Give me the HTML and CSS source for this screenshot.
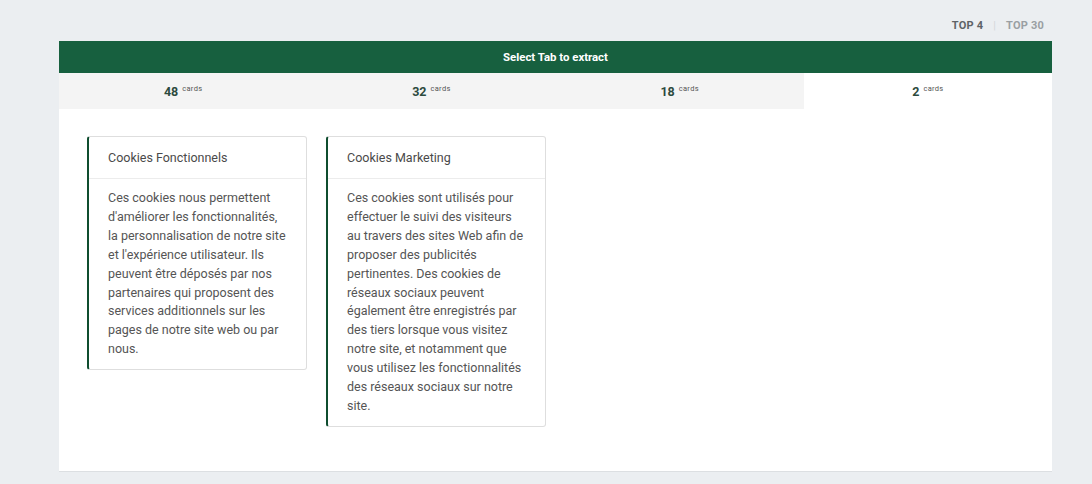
FILE: index.html
```html
<!DOCTYPE html>
<html lang="fr">
<head>
<meta charset="utf-8">
<link rel="stylesheet" href="styles.css">
</head>
<body>
<div class="page">
  <nav class="top-links">
    <span class="top-link active">TOP 4</span>
    <span class="sep">|</span>
    <span class="top-link">TOP 30</span>
  </nav>
  <section class="panel">
    <header class="panel-head">Select Tab to extract</header>
    <div class="tabs">
      <div class="tab"><b>48</b><sup>cards</sup></div>
      <div class="tab"><b>32</b><sup>cards</sup></div>
      <div class="tab"><b>18</b><sup>cards</sup></div>
      <div class="tab current"><b>2</b><sup>cards</sup></div>
    </div>
    <div class="cards">
      <article class="card">
        <h3 class="card-title">Cookies Fonctionnels</h3>
        <p class="card-body">Ces cookies nous permettent d'améliorer les fonctionnalités, la personnalisation de notre site et l'expérience utilisateur. Ils peuvent être déposés par nos partenaires qui proposent des services additionnels sur les pages de notre site web ou par nous.</p>
      </article>
      <article class="card">
        <h3 class="card-title">Cookies Marketing</h3>
        <p class="card-body">Ces cookies sont utilisés pour effectuer le suivi des visiteurs au travers des sites Web afin de proposer des publicités pertinentes. Des cookies de réseaux sociaux peuvent également être enregistrés par des tiers lorsque vous visitez notre site, et notamment que vous utilisez les fonctionnalités des réseaux sociaux sur notre site.</p>
      </article>
    </div>
  </section>
</div>
</body>
</html>
```
FILE: styles.css
```css
html, body {
  margin: 0;
  padding: 0;
  background: #ebeef1;
  font-family: Roboto, "Liberation Sans", sans-serif;
}
.page {
  padding: 16px 40px 13px 59px;
}
.top-links {
  display: flex;
  justify-content: flex-end;
  align-items: center;
  gap: 10px;
  height: 18px;
  padding-right: 8px;
  margin-bottom: 7px;
  font-size: 11px;
  font-weight: 700;
  letter-spacing: 0.2px;
}
.top-link { color: #9a9fa3; }
.top-link.active { color: #5e6367; }
.sep { color: #d4d7da; font-weight: 400; }
.panel {
  background: #fff;
  height: 430px;
  border-bottom: 1px solid #dcdfe2;
}
.panel-head {
  background: #17603f;
  color: #fff;
  height: 32px;
  display: flex;
  align-items: center;
  justify-content: center;
  font-size: 11.4px;
  font-weight: 700;
}
.tabs {
  display: grid;
  grid-template-columns: repeat(4, 1fr);
  height: 36px;
}
.tab {
  background: #f4f4f4;
  display: flex;
  justify-content: center;
  align-items: center;
  gap: 4px;
  color: #2c4a3e;
}
.tab b { font-size: 12.5px; font-weight: 700; }
.tab sup { font-size: 7.5px; color: #555; align-self: flex-start; margin-top: 11px; letter-spacing: 0.3px; }
.tab.current { background: #fff; }
.cards {
  display: flex;
  align-items: flex-start;
  gap: 19px;
  padding: 27px 28px;
}
.card {
  width: 217px;
  border: 1px solid #dedede;
  border-left: 2px solid #0f4d2f;
  border-radius: 3px;
  background: #fff;
}
.card-title {
  margin: 0;
  height: 41px;
  display: flex;
  align-items: center;
  padding-left: 19px;
  font-size: 12.5px;
  font-weight: 400;
  color: #4a4a4a;
  border-bottom: 1px solid #ececec;
}
.card-body {
  margin: 0;
  padding: 10px 18px 10px 19px;
  font-size: 12.5px;
  line-height: 18.9px;
  color: #555;
}
```
